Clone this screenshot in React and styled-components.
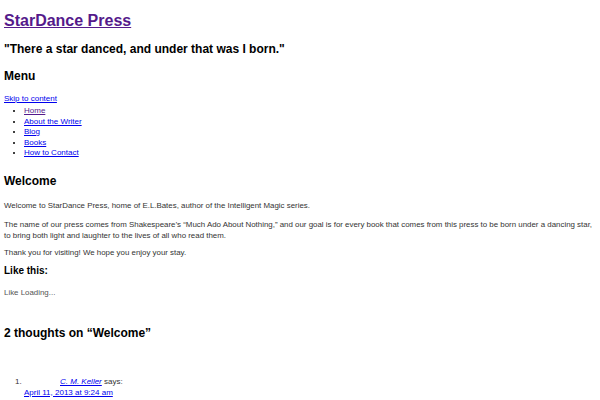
import React from "react";
import styled, { createGlobalStyle } from "styled-components";

const Global = createGlobalStyle`
  html, body { margin: 0; padding: 0; background: #fff; }
  body { padding: 0 0 0 4px; font-family: "Liberation Sans", Arial, sans-serif; color: #000; }
`;

const SiteTitle = styled.h1`
  margin: 11px 0 0;
  font-size: 16px;
  font-weight: bold;
  line-height: 20px;
  a { color: #551a8b; }
`;

const Tagline = styled.h2`
  margin: 10px 0 0;
  font-size: 12px;
  font-weight: bold;
  line-height: 16px;
`;

const MenuTitle = styled.h3`
  margin: 11px 0 0;
  font-size: 12px;
  font-weight: bold;
  line-height: 16px;
`;

const SkipLink = styled.a`
  display: block;
  margin-top: 10px;
  font-size: 8px;
  line-height: 10px;
  color: #0000ee;
`;

const NavList = styled.ul`
  margin: 2px 0 0;
  padding-left: 20px;
  font-size: 8px;
  line-height: 10.5px;
`;

const NavLink = styled.a`
  color: ${(p) => (p.$visited ? "#551a8b" : "#0000ee")};
`;

const PostTitle = styled.h2`
  margin: 14px 0 0;
  font-size: 12px;
  font-weight: bold;
  line-height: 16px;
`;

const Para = styled.p`
  margin: ${(p) => p.$gap ?? 8}px 0 0;
  font-size: 7.9px;
  line-height: 11px;
  color: ${(p) => (p.$muted ? "#555" : "#333")};
`;

const LikeTitle = styled.h3`
  margin: 6.5px 0 0;
  font-size: 10px;
  font-weight: bold;
  line-height: 14px;
`;

const CommentsTitle = styled.h2`
  margin: 27.5px 0 0;
  font-size: 12px;
  font-weight: bold;
  line-height: 16px;
`;

const CommentList = styled.ol`
  margin: 34.5px 0 0;
  padding-left: 20px;
  font-size: 8px;
  line-height: 11px;
  color: #333;
`;

const Author = styled.span`
  padding-left: 36px;
  a { color: #0000ee; font-style: italic; }
`;

const DateLink = styled.a`
  color: #0000ee;
`;

export default function App() {
  return (
    <>
      <Global />
      <SiteTitle><a href="#">StarDance Press</a></SiteTitle>
      <Tagline>"There a star danced, and under that was I born."</Tagline>
      <MenuTitle>Menu</MenuTitle>
      <SkipLink href="#">Skip to content</SkipLink>
      <NavList>
        <li><NavLink $visited href="#">Home</NavLink></li>
        <li><NavLink href="#">About the Writer</NavLink></li>
        <li><NavLink href="#">Blog</NavLink></li>
        <li><NavLink href="#">Books</NavLink></li>
        <li><NavLink href="#">How to Contact</NavLink></li>
      </NavList>
      <PostTitle>Welcome</PostTitle>
      <Para $gap={11}>Welcome to StarDance Press, home of E.L.Bates, author of the Intelligent Magic series.</Para>
      <Para>The name of our press comes from Shakespeare’s “Much Ado About Nothing,” and our goal is for every book that comes from this press to be born under a dancing star, to bring both light and laughter to the lives of all who read them.</Para>
      <Para $gap={6}>Thank you for visiting! We hope you enjoy your stay.</Para>
      <LikeTitle>Like this:</LikeTitle>
      <Para $gap={8.5} $muted>Like Loading...</Para>
      <CommentsTitle>2 thoughts on “Welcome”</CommentsTitle>
      <CommentList>
        <li>
          <Author><a href="#">C. M. Keller</a> says:</Author>
          <br />
          <DateLink href="#">April 11, 2013 at 9:24 am</DateLink>
        </li>
      </CommentList>
    </>
  );
}
